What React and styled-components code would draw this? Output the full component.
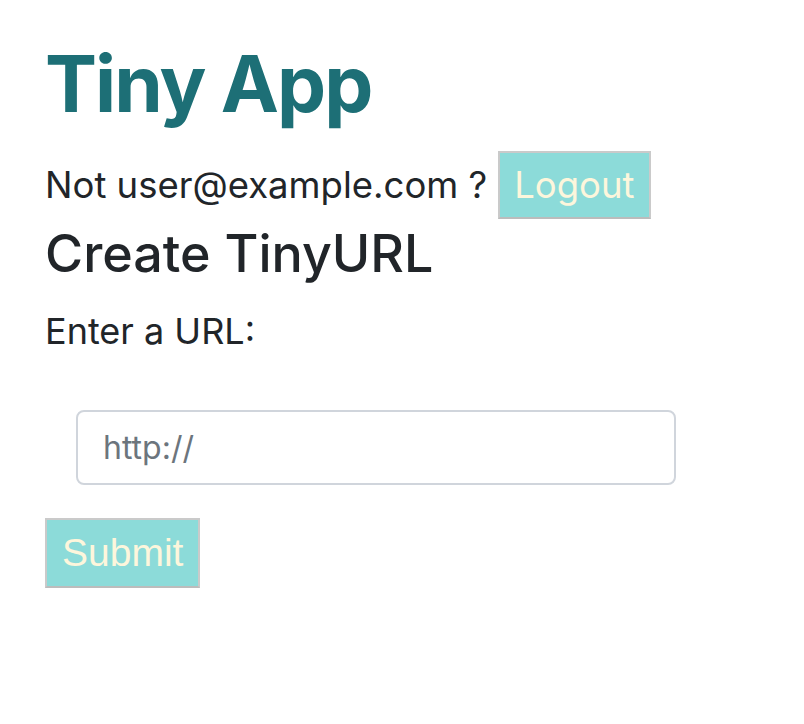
import styled, { createGlobalStyle } from "styled-components";

const GlobalStyle = createGlobalStyle`
  body {
    margin: 0;
    background: #ffffff;
    font-family: Inter, "Noto Sans", sans-serif;
    color: #212529;
  }
`;

const Page = styled.div`
  padding: 36px 0 0 45px;
  display: flex;
  flex-direction: column;
  align-items: flex-start;
`;

const Title = styled.h1`
  margin: 0;
  font-size: 78px;
  font-weight: 700;
  line-height: 96px;
  color: #1d6f76;
  letter-spacing: -2px;
`;

const UserRow = styled.div`
  display: flex;
  align-items: center;
  gap: 11px;
  margin-top: 19px;
  font-size: 36.5px;
  line-height: 42px;
`;

const Button = styled.button`
  background: #8cdbd9;
  color: #fdf6dc;
  border: 2px solid #cacaca;
  border-bottom-color: #bcbcbc;
  border-radius: 0;
  padding: 0 ${(p) => p.$pad}px;
  height: ${(p) => p.$h}px;
  font-family: ${(p) => p.$font};
  font-size: ${(p) => p.$size}px;
  cursor: pointer;
`;

const Heading = styled.h3`
  margin: 4px 0 0;
  font-size: 52px;
  font-weight: 500;
  line-height: 62px;
`;

const Label = styled.label`
  margin-top: 24px;
  font-size: 36px;
  line-height: 44px;
`;

const Input = styled.input`
  margin: 57px 0 0 31px;
  width: 600px;
  height: 75px;
  box-sizing: border-box;
  border: 2px solid #d0d5dc;
  border-radius: 8px;
  padding: 0 25px;
  font-family: Inter, "Noto Sans", sans-serif;
  font-size: 32px;
  color: #495057;
  outline: none;
  &::placeholder {
    color: #6c757d;
  }
`;

const Form = styled.form`
  display: flex;
  flex-direction: column;
  align-items: flex-start;
`;

export default function App() {
  return (
    <>
      <GlobalStyle />
      <Page>
        <Title>Tiny App</Title>
        <UserRow>
          <span>Not user@example.com ?</span>
          <Button $pad={14} $h={68} $size={36.5} $font={'Inter, "Noto Sans", sans-serif'}>
            Logout
          </Button>
        </UserRow>
        <Heading>Create TinyURL</Heading>
        <Form onSubmit={(e) => e.preventDefault()}>
          <Label htmlFor="longURL">Enter a URL:</Label>
          <Input id="longURL" type="text" placeholder="http://" />
          <Button
            style={{ marginTop: 33 }}
            $pad={15}
            $h={70}
            $size={39}
            $font={'"Liberation Sans", Arial, sans-serif'}
          >
            Submit
          </Button>
        </Form>
      </Page>
    </>
  );
}
